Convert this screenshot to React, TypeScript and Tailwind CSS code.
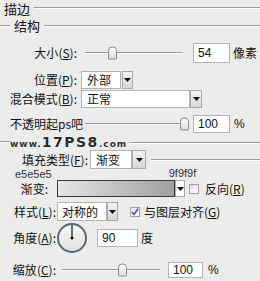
import React from 'react';

const cjk = "font-['Noto_Sans_CJK_SC',sans-serif]";
const num = "font-['Liberation_Sans',sans-serif]";

const Line = ({ className = '' }: { className?: string }) => (
  <div className={`h-[2px] border-t border-[#9c9c9c] border-b border-b-white ${className}`} />
);

const Arrow = ({ className = '' }: { className?: string }) => (
  <div className={`h-full flex items-center justify-center bg-gradient-to-b from-[#f4f4f4] to-[#d6d6d6] border border-[#a9a9a9] ${className}`}>
    <svg width="7" height="4" viewBox="0 0 7 4">
      <path d="M0 0h7L3.5 4z" fill="#111" />
    </svg>
  </div>
);

const Input = ({ value, className = '' }: { value: string; className?: string }) => (
  <div className={`h-full bg-white border border-[#b4b4b4] flex items-center pl-[4px] text-[12px] text-[#111] ${num} ${className}`}>
    {value}
  </div>
);

const Slider = ({ width, thumb }: { width: number; thumb: number }) => (
  <div className="relative h-full" style={{ width }}>
    <Line className="absolute left-0 right-0 top-1/2 -translate-y-1/2" />
    <div
      className="absolute top-1/2 -translate-y-1/2 w-[9px] h-[13px] rounded-t-[4px] rounded-b-[1px] border border-[#8a8a8a] bg-gradient-to-b from-white to-[#dcdcdc]"
      style={{ left: thumb }}
    />
  </div>
);

const Check = ({ checked }: { checked?: boolean }) => (
  <div className="w-[10px] h-[10px] border border-[#a3a3a3] bg-gradient-to-br from-[#e2e2e2] to-white flex items-center justify-center">
    {checked && (
      <svg width="8" height="8" viewBox="0 0 8 8">
        <path d="M1 4l2 2.5L7 0.8" stroke="#3b55b8" strokeWidth="1.6" fill="none" />
      </svg>
    )}
  </div>
);

const L = ({ t, k }: { t: string; k: string }) => (
  <>
    {t}(<u>{k}</u>):
  </>
);

export default function App() {
  return (
    <div className={`w-[260px] h-[281px] bg-[#ececec] overflow-hidden text-[12px] leading-none text-[#111] ${cjk}`}>
      {/* 描边 */}
      <div className="h-[16px] flex items-center pl-[4px] gap-[4px]">
        <span className="text-[13px]">描边</span>
        <Line className="flex-1" />
      </div>
      {/* 结构 */}
      <div className="h-[19px] flex items-center gap-[4px]">
        <Line className="w-[10px]" />
        <span className="text-[13px]">结构</span>
        <Line className="flex-1" />
      </div>
      {/* 大小 */}
      <div className="h-[20px] mt-[8px] flex items-center">
        <div className="w-[77px] text-right"><L t="大小" k="S" /></div>
        <div className="ml-[8px] h-full"><Slider width={98} thumb={23} /></div>
        <div className="ml-[10px] w-[37px] h-full"><Input value="54" /></div>
        <span className="ml-[3px]">像素</span>
      </div>
      {/* 位置 */}
      <div className="h-[18px] mt-[8px] flex items-center">
        <div className="w-[77px] text-right"><L t="位置" k="P" /></div>
        <div className="ml-[4px] h-full flex">
          <div className="w-[40px] h-full bg-white border border-[#b4b4b4] flex items-center pl-[5px]">外部</div>
          <Arrow className="w-[11px] ml-[1px]" />
        </div>
      </div>
      {/* 混合模式 */}
      <div className="h-[18px] mt-[1px] flex items-center">
        <div className="w-[77px] text-right"><L t="混合模式" k="B" /></div>
        <div className="ml-[4px] h-full flex">
          <div className="w-[109px] h-full bg-white border border-[#b4b4b4] flex items-center pl-[5px]">正常</div>
          <Arrow className="w-[12px]" />
        </div>
      </div>
      {/* 不透明度 */}
      <div className="h-[18px] mt-[7px] flex items-center">
        <span className="ml-[10px] w-[75px]">不透明起ps吧</span>
        <div className="h-full"><Slider width={103} thumb={95} /></div>
        <div className="ml-[5px] w-[37px] h-full"><Input value="100" /></div>
        <span className={`ml-[4px] text-[12px] ${num}`}>%</span>
      </div>
      {/* watermark */}
      <div className="h-[14px] mt-[2px] flex items-center">
        <Line className="w-[10px]" />
        <span className="font-['DejaVu_Sans',sans-serif] font-bold text-[#2b2b2b] [text-shadow:0_0_2px_#fff,0_0_1px_#fff] flex items-end leading-none">
          <span className="text-[9px] tracking-[1px]">www.</span>
          <span className="text-[14px] tracking-[1.5px]">17PS8</span>
          <span className="text-[9px] tracking-[1px]">.com</span>
        </span>
        <Line className="flex-1 ml-[2px] mt-[2px]" />
      </div>
      {/* 填充类型 */}
      <div className="h-[19px] mt-[1px] flex items-center">
        <div className="w-[88px] text-right"><L t="填充类型" k="F" /></div>
        <div className="ml-[2px] h-full flex">
          <div className="w-[42px] h-full bg-white border border-[#b4b4b4] flex items-center pl-[5px]">渐变</div>
          <Arrow className="w-[14px]" />
        </div>
        <Line className="flex-1 ml-[5px]" />
      </div>
      {/* colour notes */}
      <div className={`h-[10px] flex items-center text-[11px] text-[#333] ${num}`}>
        <span className="ml-[15px]">e5e5e5</span>
        <span className="ml-[117px] -mt-[2px]">9f9f9f</span>
      </div>
      {/* 渐变 */}
      <div className="h-[17px] mt-[1px] flex items-center">
        <div className="w-[48px] text-right">渐变:</div>
        <div className="ml-[9px] h-full flex">
          <div className="w-[118px] h-full border border-[#3a3a3a] bg-gradient-to-r from-[#e5e5e5] to-[#9f9f9f]" />
          <Arrow className="w-[10px] bg-none bg-white" />
        </div>
        <div className="ml-[4px]"><Check /></div>
        <span className="ml-[6px]">反向(<u>R</u>)</span>
      </div>
      {/* 样式 */}
      <div className="h-[19px] mt-[5px] flex items-center">
        <div className="w-[56px] text-right"><L t="样式" k="L" /></div>
        <div className="ml-[1px] h-full flex">
          <div className="w-[50px] h-full bg-white border border-[#b4b4b4] flex items-center pl-[4px]">对称的</div>
          <Arrow className="w-[11px]" />
        </div>
        <div className="ml-[12px]"><Check checked /></div>
        <span className="ml-[4px]">与图层对齐(<u>G</u>)</span>
      </div>
      {/* 角度 */}
      <div className="h-[31px] mt-[1px] flex items-center">
        <div className="w-[56px] text-right"><L t="角度" k="A" /></div>
        <div className="ml-[1px] w-[30px] h-[30px] rounded-full border-2 border-[#5d6675] bg-gradient-to-b from-[#f6f6f6] to-[#e2e2e2] flex justify-center">
          <svg width="26" height="26" viewBox="0 0 26 26">
            <line x1="13" y1="0" x2="13" y2="13" stroke="#111" strokeWidth="1.2" />
            <circle cx="13" cy="13" r="1.5" fill="#111" />
          </svg>
        </div>
        <div className="ml-[10px] w-[41px] h-[18px]"><Input value="90" /></div>
        <span className="ml-[3px]">度</span>
      </div>
      {/* 缩放 */}
      <div className="h-[16px] mt-[9px] flex items-center">
        <div className="w-[56px] text-right"><L t="缩放" k="C" /></div>
        <div className="ml-[6px] h-full"><Slider width={98} thumb={56} /></div>
        <div className="ml-[8px] w-[35px] h-full"><Input value="100" /></div>
        <span className={`ml-[5px] text-[12px] ${num}`}>%</span>
      </div>
    </div>
  );
}
